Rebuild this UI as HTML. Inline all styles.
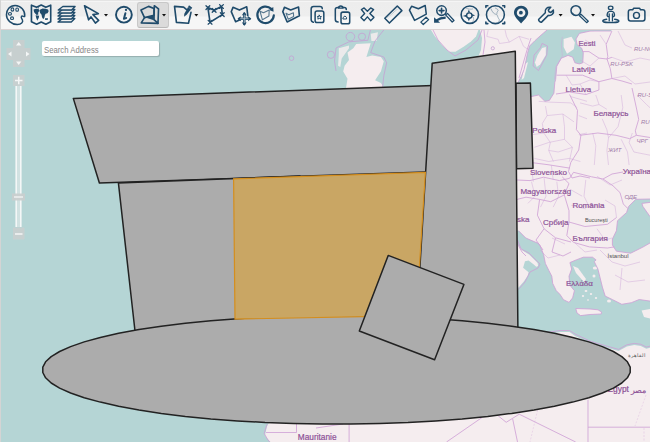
<!DOCTYPE html>
<html><head><meta charset="utf-8">
<style>
html,body{margin:0;padding:0;width:650px;height:442px;overflow:hidden;background:#b5d5d5;font-family:"Liberation Sans",sans-serif}
#tb{position:absolute;left:0;top:0;width:650px;height:29px;background:linear-gradient(#f5f5f5 0,#f5f5f5 1px,#ededed 1px,#eeeeee 15px,#f6f6f6 16px,#f6f6f6 29px);border-top:1px solid #e4e4e4;box-sizing:border-box}
#tbline{position:absolute;left:0;top:29px;width:650px;height:1px;background:#dcd2d2}
#lb{position:absolute;left:0;top:0;width:1px;height:442px;background:#d4d4d4}
#map{position:absolute;left:0;top:30px;width:650px;height:412px}
#sel{position:absolute;left:137px;top:2px;width:32px;height:26px;box-sizing:border-box;background:#dbdbdb;border:1px solid #c8c8c8;border-bottom-color:#b9b9b9;border-radius:3px}
#icons{position:absolute;left:0;top:0}
#search{position:absolute;left:42px;top:41px;width:117px;height:15px;box-sizing:border-box;background:#fff;border-radius:2px;box-shadow:1px 1px 1px rgba(0,0,0,0.18)}
#search span{position:absolute;left:2.3px;top:2.8px;font-size:9.5px;color:#858585;transform:scaleX(0.815);transform-origin:0 0;white-space:nowrap;line-height:11px}
</style></head><body>
<svg id="map" width="650" height="412" viewBox="0 30 650 412">
 <rect x="0" y="30" width="650" height="412" fill="#b5d5d5"/>
 <g id="land" fill="#f5edef" stroke="none">
  <!-- Europe -->
  <path d="M480,30 L650,30 L650,301.1 L639.2,299.5 L631.3,302.7 L621.8,304.3 L612.3,299.5 L605.2,296.1 L602.4,287.1 L599.7,276.2 L597.9,269 L594.3,261.7 L596.1,259.9 L592.5,257.2 L583.4,257.2 L576.2,259.9 L569.9,262.6 L571.7,269 L569,276.2 L569.9,285.2 L574.4,290.7 L572.6,297.9 L569,302.4 L563.5,299.7 L559.9,294.3 L556.3,290.7 L552.7,283.4 L551.8,276.2 L549,270.8 L545.4,263.5 L543.6,254.5 L540,245.4 L538.5,243.5 L525.8,238 L518.6,230.8 L500,230 L478,57 L481,50 L482,38 Z"/>
  <!-- Norway -->
  <path d="M431,30 L435,36.5 L442,45 L449,51.7 L455.5,51.7 L464,46.6 L471,41.5 L476,36.5 L478.4,30 Z"/>
  <!-- Scotland -->
  <path d="M356.2,43.9 L370.7,43.2 L367.8,52.6 L366.4,57 L372.2,55.5 L380.9,57 L383.8,61.3 L380.9,71.5 L378,75.8 L375.1,80.2 L380.9,83.1 L383.8,87.4 L384,90 L346,90 L346.1,87.4 L347.5,78.7 L343.2,71.5 L344.6,65.7 L349,59.9 L347.5,52.6 L353.3,48.3 Z"/>
  <path d="M338.8,48.3 L349,45.4 L349,48.3 L341.7,58.4 L340.3,67.1 L338.1,65.7 L338.8,54.1 Z" opacity="0.85"/>
  <path d="M370.7,33.8 L378,32.3 L376.5,41 L371.4,41 Z" opacity="0.85"/>
  <!-- Africa -->
  <path d="M270.5,442 L267.7,439 L265,435.3 L266.8,427 L268.6,423.3 L300,410 L540,336 L560,332 L569.5,332 L575,336 L590,343 L599.2,345.5 L610.3,348.7 L618.6,351 L626.9,346.4 L634.3,345 L640.8,346 L646.3,348.7 L650,347.8 L650,442 Z"/>
 </g>
 <g id="water" fill="#b5d5d5" stroke="none">
  <!-- Baltic -->
  <path d="M547,30 L541,35.2 L534.9,40.7 L529.5,46.1 L527.5,53.3 L526,60.6 L524,69.6 L521.5,76 L518,82.3 L515,83 L515,97 L530.4,96.8 L538.5,95 L544.9,101.3 L549.4,100.4 L553.9,93.2 L554.8,82.3 L555.6,79.7 L556.8,66.2 L561.3,58.2 L568,55.4 L572.6,57.1 L574.9,62.8 L579.4,63.9 L582.8,62.8 L583.3,52.6 L581.6,48.1 L577.1,44.7 L576,39 L579.4,33.4 L590,31.1 L595,31 L611,31 L612,30 Z"/>
  <!-- Black sea -->
  <path d="M635.8,199.3 L628.6,206.4 L626.6,212.5 L617.5,220.7 L616.4,230.8 L612.4,239 L612.4,245.1 L616.4,251.2 L630.7,253.2 L642.9,247.1 L650,243 L650,216.6 L642.9,206.4 L641.9,203.4 L650,202.4 L650,199 Z"/>
 </g>
 <g fill="#f5edef" stroke="none">
  <!-- Gotland -->
  <path d="M542.1,47.9 L545.8,47 L545.8,55.1 L540.3,64.2 L536.7,66.9 L534.9,62.4 L537.6,55.1 Z"/>
  <!-- Oland -->
  <path d="M525,64 L528,62 L524,78 L521.5,80 Z"/>
  <!-- Estonian islands -->
  <path d="M563.6,39 L571.5,36.8 L574.9,42.4 L573.7,49.2 L567,53.7 L563.6,47 Z"/>
  <!-- Italy heel -->
  <path d="M510,235 L518.4,245.4 L522.6,250.5 L529.4,254.7 L533.1,258.6 L537.6,263.1 L538.1,265.9 L536.3,266.8 L533.1,264 L528.6,260.4 L525,261.3 L523.1,267.7 L528.6,272.2 L527.7,275.8 L524,281.2 L518.6,287.6 L510,290 Z"/>
  <path d="M641.6,310.6 L650,309 L650,318.5 L644,317 Z"/>
  <!-- Aegean islands -->
  <path d="M573,266 L578,268 L586,279 L584,282 L576,273 Z"/>
  <ellipse cx="595" cy="268" rx="2.2" ry="1.6"/>
  <ellipse cx="594" cy="276" rx="1.5" ry="1.5"/>
  <ellipse cx="586" cy="291" rx="1.4" ry="1"/>
  <ellipse cx="591" cy="294" rx="1.2" ry="1"/>
  <ellipse cx="583" cy="296" rx="1.2" ry="0.9"/>
  <ellipse cx="596" cy="298" rx="1.2" ry="1"/>
  <ellipse cx="588" cy="300" rx="1" ry="0.8"/>
  <ellipse cx="609" cy="301" rx="2" ry="1.5"/>
  <ellipse cx="579" cy="284" rx="1" ry="1"/>
  <!-- Crete -->
  <path d="M575.8,308.5 L590,309 L598,309.8 L601.5,312 L601.2,314 L590,314.5 L580.6,315.6 L577,313 Z"/>
 </g>
 <g fill="none" stroke="#c6a2d4" stroke-width="0.9" opacity="0.9">
  <!-- Scotland maritime boundaries -->
  <path d="M336,71 L334.5,61 L336,48 L349,41.8 L367.8,40.3 L370.7,29"/>
  <path d="M383.8,30 L375,41 L370.7,52.6 L383.8,57 L386.7,62.8 L383.8,75.8 L382.3,90"/>
  <circle cx="330.9" cy="54.8" r="3.6"/>
  <circle cx="350.4" cy="36.7" r="4.3"/>
  <circle cx="362" cy="36.7" r="3.6"/>
  <circle cx="291.5" cy="58.2" r="2.3"/>
  <circle cx="492.8" cy="48.3" r="1.6"/>
 </g>
 <g fill="none" stroke="#cfa9da" stroke-width="0.6" opacity="0.8">
  <!-- internal admin boundaries (approx) -->
  <path d="M488.2,30.1 L486.8,36.4 L498.1,39.3 L499.5,43.5 L509.4,42.1 L519.2,36.4 L529.1,39.3 M505.1,30.1 L506.5,36.4 L509.4,42.1 M519.2,36.4 L523.5,46.3 L527.5,49.1 M562.4,36.8 L561.3,44.7 L562.4,56 L555.6,67.3 L554.5,79.7 M538.7,101.3 L548.7,102.1 L570.8,102.9 L577.2,107.7 M545.5,106.1 L547.1,115.6 L542.3,123.5 L543.9,133 L550.3,142.5 L548.7,150.4 L553.4,161.5 M547.1,115.6 L562.9,114 L574,121.9 M562.9,114 L564.5,126.7 L564.5,139.3 L572.4,147.3 L569.3,161.5 M532.8,134.6 L543.9,133 M534.4,147.3 L548.7,142.5 L564.5,139.3 M548.7,150.4 L558.2,152 L572.4,147.3 M534.4,158.4 L548.7,161.5 L569.3,158.4 L580.4,161.5 M578.8,115.6 L587,118.8 M578.8,134.6 L587,133 M570.8,96.6 L587,101.3 M595.8,95 L599,104.5 L606.9,109.3 M580,102.9 L592.7,106.1 L599,104.5 M621.2,95 L622.8,107.7 L618,126.7 L608.5,137.8 M602.2,118.8 L606.9,129.8 L608.5,137.8 M592.7,133 L595.8,145.7 L594.3,165 M608.5,137.8 L606.9,150.4 L608.5,165 M621.2,139.3 L627.5,152 L629.1,165 M632.3,133 L629.1,142.5 L633.9,152 L650,155.2 M637,95 L646.5,104.5 L650,107.7 M585.8,179.9 L584,196.2 L589.4,207.1 L597,205.3 M569.5,189 L582.2,196.2 M571.3,205.3 L585.8,208.9 M531.5,181.7 L535.1,196.2 L527.9,203.4 M544.1,178.1 L546,196.2 L540.5,207.1 M556.8,181.7 L558.6,196.2 L553.2,207.1 M531.5,167.2 L533.3,181.7 M551.4,165.4 L553.2,179.9 M597,176.3 L610,185 L622,180 M605,200 L615,206 L616.5,217.5 M597,228.8 L605,240 L612,238 M580,60 L590,66 L598.9,58.1 M585,40 L596,46 M600,35 L606,44 M566,75 L572,85 L580,84 L586,94.5 M580,84 L590,80 L598.9,81.7 M611.9,57.3 L625,62 L640,58 L650,60 M618,31 L625,45 L632,48 M611.9,78.5 L625,76 L635,84 L650,82 M540,250 L548,258 L560,255 M552,238 L565,244 M575,243 L585,252 L597,250 M600,250 L612,262 L625,266 L640,262 M615,275 L628,282 L645,280 M622,268 L620,290"/>
 </g>
 <g fill="none" stroke="#cf9fd6" stroke-width="0.85" opacity="0.95">
  <!-- country borders -->
  <path d="M569.6,94.5 L577.5,110.4 L576.4,129.6 L580.9,135.3 L578.7,150 L570.8,162.4 L568.5,171.5 L572,178 L580,176 L590,178"/>
  <path d="M579.8,135.3 L597.9,133 L616,135.3 L629.6,138.7 L636.4,135.3 L650,137.5"/>
  <path d="M556,94 L569.6,92 L586,94.5 L598.9,90 L598.9,81.7 L611.9,78.5 L622,81 L632,84"/>
  <path d="M632,88 L636.4,108 L638.7,119.4 L635.3,130.8 L636.4,135.3"/>
  <path d="M530,162.4 L548,164.7 L569.6,168.1"/>
  <path d="M517,180 L530,180.6 L543.6,177.2 L559.4,180.6 L569.6,178.3 L573.5,172.3"/>
  <path d="M582.6,51.6 L589,51.6 L598.9,58.1 L607,59 L611.9,57.3"/>
  <path d="M611.9,31 L606.2,44.3 L607.8,56.5 L607,59 L610.3,68.7 L611.9,78.5"/>
  <path d="M556.5,75.2 L566.3,75.2 L582.6,75.2 L598.9,81.7"/>
  <path d="M573.5,172.3 L591.6,176.8 L603,179 L613,185.8 L620,192.6 L623.3,204 L627.8,208.5"/>
  <path d="M603,179 L612,174 L623,172"/>
  <path d="M562.2,176.8 L569,183.6 L564.3,194.9 L550.7,201.7 L539.6,199.4 L526,197.2 L517,199.4"/>
  <path d="M564.3,194.9 L569,210.7 L569,222"/>
  <path d="M569,222 L584.9,226.5 L607.5,224.3 L616.5,217.5"/>
  <path d="M569,222 L566.8,235.6 L573.5,242.4 L589.4,246.9 L607.5,248 L614.3,246.9"/>
  <path d="M539.6,199.4 L537.4,215.2 L544.1,228.8 L555.5,237.8 L571,242"/>
  <path d="M544,228.8 L536,240 L543,250 M555.5,238 L552,252 L563,256 L571,252"/>
  <path d="M650,301.1 L639.2,299.5 L631.3,302.7 L621.8,304.3 L612.3,299.5 L605.2,296.1 L602.4,287.1 L599.7,276.2 L597.9,269 L594.3,261.7 L596.1,259.9 L592.5,257.2 L583.4,257.2 L576.2,259.9 L569.9,262.6 L571.7,269 L569,276.2 L569.9,285.2 L574.4,290.7 L572.6,297.9 L569,302.4 L563.5,299.7 L559.9,294.3 L556.3,290.7 L552.7,283.4 L551.8,276.2 L549,270.8 L545.4,263.5 L543.6,254.5 L540,245.4 L538.5,243.5 L525.8,238 L518.6,230.8"/>
  <path d="M517.5,240 L521,249 L529,253 L540,264 L538,268 L530,272 L525,282 L518.5,289.5 M517.5,244 L522,252 L526,256"/>
  <path d="M650,199 L635.8,199.3 L628.6,206.4 L626.6,212.5 L617.5,220.7 L616.4,230.8 L612.4,239 L612.4,245.1 L616.4,251.2 L630.7,253.2 L642.9,247.1 L650,243 M650,216.6 L642.9,206.4 L641.9,203.4 L650,202.4"/>
  <path d="M575.8,308.5 L590,309 L598,309.8 L601.5,312 L601.2,314 L590,314.5 L580.6,315.6 L577,313 Z"/>
  <path d="M547,30 L541,35.2 L534.9,40.7 L529.5,46.1 L527.5,53.3 L526,60.6 L524,69.6 L521.5,76 L518,82.3"/>
  <path d="M530.4,96.8 L538.5,95 L544.9,101.3 L549.4,100.4 L553.9,93.2 L554.8,82.3 L555.6,79.7 L556.8,66.2 L561.3,58.2 L568,55.4 L572.6,57.1 L574.9,62.8 L579.4,63.9 L582.8,62.8 L583.3,52.6 L581.6,48.1 L577.1,44.7 L576,39 L579.4,33.4 L590,31.1 L595,31 L611,31"/>
  <path d="M531,38 L527,50 L523,64 L519,78 M542.1,43.4 L547.6,46.1 L546.7,55.1 L538.5,70.5 L533.1,66 L534,55.1 L540.3,47.9 Z"/>
  <path d="M433,30 L438,40 L447,50 L455,56 L466,50 L478,40 L482,30 M484,30 L485,42 L483,55"/>
  <path d="M540,333.5 L560,330.5 L569.5,330.5 L576,334.5 L590,341.1 L599.2,343.9 L610.3,347.1 L618.6,349.4 L626.9,344.8 L634.3,343.4 L640.8,344.3 L646.3,347.1 L650,346.2"/>
  <path d="M267,424.2 L264.2,433.5 L268,440 L269.8,442"/>
  <path d="M588,399.7 L588,442 M588,427.2 L650,427.2 M482,417.5 L446.5,442 M498.2,415.8 L506.2,422.3 L519.2,414.2 L575.7,442 M512.7,419 L517.5,442 M349.1,424 L349.1,442 M266,432.5 L296.5,432.5 L296.5,424 M316,428 L343,424"/>
  <path d="M646,395 L635,426 M644,428 L644,442 M540,400 L530,442" stroke-dasharray="2,1.5" stroke-width="0.5" opacity="0.6"/>
 </g>
 <g font-family="Liberation Sans, sans-serif" fill="#8d5297" stroke="#8d5297" stroke-width="0.2">
  <text x="578.5" y="45.7" font-size="7.6">Eesti</text>
  <text x="572" y="72.0" font-size="8">Latvija</text>
  <text x="565.5" y="92.4" font-size="8">Lietuva</text>
  <text x="593.4" y="116.2" font-size="8">Беларусь</text>
  <text x="532.3" y="133.3" font-size="8">Polska</text>
  <text x="530" y="175.2" font-size="8">Slovensko</text>
  <text x="622.8" y="174.0" font-size="8">Україна</text>
  <text x="520.4" y="194.2" font-size="8">Magyarország</text>
  <text x="572.4" y="207.7" font-size="8">România</text>
  <text x="517" y="222.0" font-size="8">ska</text>
  <text x="543" y="225.3" font-size="8">Србија</text>
  <text x="572.4" y="240.5" font-size="8">България</text>
  <text x="566" y="286.3" font-size="8">Ελλάδα</text>
  <text x="607.5" y="392.3" font-size="8.4">Egypt</text><text x="630.6" y="392.5" font-size="8">مصر</text>
  <text x="297.8" y="440" font-size="8.3">Mauritanie</text>
 </g>
 <g font-family="Liberation Sans, sans-serif" fill="#a07aa8" font-style="italic" font-size="6">
  <text x="610.3" y="65.5">RU-PSK</text>
  <text x="633.9" y="50.8">RU-NGR</text>
  <text x="637.5" y="96.6">RU-SMO</text>
  <text x="641" y="124">RU-BRY</text>
  <text x="636.4" y="143.2">ЧРГ</text>
  <text x="608" y="152.3">ЖИТ</text>
  <text x="624.4" y="199.4">ОДЕ</text>
 </g>
 <g font-family="Liberation Sans, sans-serif" fill="#505050" font-size="6">
  <text x="584.9" y="221.8" font-size="5.5">Bucureşti</text>
  <text x="607.5" y="258.2">İstanbul</text>
  <text x="628.3" y="357" font-size="5">القاهرة</text>
 </g>
 <!-- polygons -->
 <g stroke="#222" stroke-width="1.5" fill="#acacac" stroke-linejoin="round">
  <path d="M516,83.2 L530.4,83 L533,168.2 L516.5,168.8 Z"/>
  <path d="M73.3,98.4 L440,85.2 L440,171.6 L99.4,183 Z"/>
  <path d="M118.4,182.9 L300,176 L300,340 L136,340 Z"/>
  <path d="M432.2,63.3 L515.3,51.3 L518,340 L415.5,340 Z"/>
  <path d="M630.2,372.5 L627.4,377.8 L621.8,383.0 L613.4,388.1 L602.4,393.0 L588.8,397.7 L572.7,402.1 L554.4,406.3 L534.0,410.0 L511.7,413.4 L487.7,416.4 L462.2,418.9 L435.6,420.9 L408.0,422.5 L379.7,423.5 L350.9,424.0 L322.1,424.0 L293.3,423.5 L265.0,422.5 L237.4,420.9 L210.8,418.9 L185.3,416.4 L161.3,413.4 L139.0,410.0 L118.6,406.3 L100.3,402.1 L84.2,397.7 L70.6,393.0 L59.6,388.1 L51.2,383.0 L45.6,377.8 L42.8,372.5 L42.8,367.1 L45.6,361.8 L51.2,356.6 L59.6,351.5 L70.6,346.6 L84.2,341.9 L100.3,337.5 L118.6,333.3 L139.0,329.6 L161.3,326.2 L185.3,323.2 L210.8,320.7 L237.4,318.7 L265.0,317.1 L293.3,316.1 L322.1,315.6 L350.9,315.6 L379.7,316.1 L408.0,317.1 L435.6,318.7 L462.2,320.7 L487.7,323.2 L511.7,326.2 L534.0,329.6 L554.4,333.3 L572.7,337.5 L588.8,341.9 L602.4,346.6 L613.4,351.5 L621.8,356.6 L627.4,361.8 L630.2,367.1 Z"/>
 </g>
 <path d="M233.6,178.8 L425.4,172.4 L416.3,315.6 L235,319.1 Z" fill="#c9a664" stroke="#d48e1e" stroke-width="1.2"/>
 <path d="M388.2,255.4 L463.9,284.4 L434.6,359.7 L359.3,331 Z" fill="#acacac" stroke="#222" stroke-width="1.5" stroke-linejoin="round"/>
</svg>
<div id="tb"></div>
<div id="tbline"></div>
<div id="sel"></div>
<svg id="icons" width="650" height="29" viewBox="0 0 650 29" style="position:absolute;left:0;top:0">
<defs>
<style>.i{fill:none;stroke:#1f4b6b;stroke-width:30;stroke-linejoin:round;stroke-linecap:round}.f{fill:#1f4b6b}</style>
</defs>
<!-- palette -->
<g transform="translate(4,3) scale(0.05429)">
 <path class="i" style="stroke-width:27" d="M382,240 C392,140 310,45 205,45 C105,45 45,125 45,215 C45,315 135,395 245,395 C325,395 352,350 342,318 C334,290 305,270 322,245 C340,225 378,270 382,240 Z"/>
 <ellipse class="i" cx="155" cy="120" rx="25" ry="30" style="stroke-width:20"/>
 <ellipse class="i" cx="242" cy="123" rx="25" ry="30" style="stroke-width:20"/>
 <ellipse class="i" cx="110" cy="200" rx="28" ry="25" style="stroke-width:20"/>
 <ellipse class="i" cx="148" cy="280" rx="28" ry="25" style="stroke-width:20"/>
</g>
<!-- world map -->
<g transform="translate(29,3) scale(0.05429)">
 <path class="i" d="M45,40 L140,80 L225,38 L310,80 L400,40 L400,345 L310,390 L225,350 L140,392 L45,345 Z"/>
 <path class="f" d="M85,118 L130,105 L178,112 L188,148 L168,178 L172,212 L142,222 L118,196 L95,172 L88,142 Z"/>
 <path class="f" d="M122,224 L186,234 L178,276 L152,326 L132,272 Z"/>
 <path class="f" d="M192,128 L250,100 L300,108 L352,118 L362,152 L342,190 L305,198 L292,225 L285,265 L262,300 L240,262 L232,215 L205,185 L198,160 Z"/>
 <path class="f" d="M292,282 L350,282 L348,310 L300,312 Z"/>
 <circle class="f" cx="172" cy="88" r="12"/>
</g>
<!-- layers -->
<g transform="translate(55,3) scale(0.05429)" >
 <path class="i" style="fill:#f1f1f1;stroke-width:26" d="M140,285 L365,285 L300,350 L55,350 Z"/>
 <path class="i" style="fill:#f1f1f1;stroke-width:26" d="M140,230 L365,230 L300,295 L55,295 Z"/>
 <path class="i" style="fill:#f1f1f1;stroke-width:26" d="M140,175 L365,175 L300,240 L55,240 Z"/>
 <path class="i" style="fill:#f1f1f1;stroke-width:26" d="M140,120 L365,120 L300,185 L55,185 Z"/>
 <path class="i" style="fill:#f1f1f1;stroke-width:26" d="M145,65 L370,65 L305,130 L60,130 Z"/>
</g>
<!-- arrow -->
<g transform="translate(81,3) scale(0.05429)">
 <path class="i" d="M65,50 L320,195 L220,215 L325,320 L265,370 L185,255 L140,310 Z"/>
</g>
<path d="M104,14 L108,14 L106,16.5 Z" fill="#111"/>
<!-- info -->
<circle cx="123.9" cy="14.7" r="7.9" fill="none" stroke="#1f4b6b" stroke-width="1.9"/>
<circle cx="126" cy="9.9" r="1.15" fill="#1f4b6b"/>
<path d="M125.4,13.2 L123.9,18.7 L126.2,18.1" fill="none" stroke="#1f4b6b" stroke-width="2" stroke-linecap="round" stroke-linejoin="round"/>
<!-- selected polygon -->
<g transform="translate(138,3) scale(0.05429)">
 <path class="i" d="M55,130 L195,62 L295,100 L295,225 L120,270 Z"/>
 <path class="i" d="M300,50 L378,110 L368,375 L295,305 Z"/>
 <path class="i" d="M120,270 L60,365 L368,375"/>
 <path class="f" d="M150,272 L292,215 L292,318 Z"/>
</g>
<path d="M162,14 L166,14 L164,16.5 Z" fill="#111"/>
<!-- edit -->
<g transform="translate(171,3) scale(0.05429)">
 <path class="i" d="M282,118 L232,75 L65,62 L100,358 L322,372 L368,172"/>
 <path class="f" d="M332,42 L392,88 L288,218 L240,252 L246,196 Z"/>
 <path d="M318,78 L372,118" stroke="#f1f1f1" stroke-width="10" opacity="0.5"/>
</g>
<path d="M194.3,14 L198.3,14 L196.3,16.5 Z" fill="#111"/>
<!-- heart polygon vertices -->
<g transform="translate(203,3) scale(0.05429)">
 <path class="i" d="M90,85 L205,135 L340,65 L355,215 L130,355 Z"/>
 <path class="i" style="stroke-width:24" d="M55,50 L125,120 M125,50 L55,120 M170,100 L240,170 M240,100 L170,170 M305,30 L375,100 M375,30 L305,100 M320,180 L390,250 M390,180 L320,250 M95,320 L165,390 M165,320 L95,390"/>
</g>
<!-- move polygon -->
<g transform="translate(228,3) scale(0.05429)">
 <path class="i" d="M240,300 L140,345 L60,160 L92,80 L210,130 L345,70 L365,235"/>
 <path class="i" style="stroke-width:46" d="M300,200 L300,385 M210,290 L395,290"/>
 <path class="f" d="M300,165 L345,225 L255,225 Z M300,420 L345,360 L255,360 Z M175,290 L235,245 L235,335 Z M430,290 L370,245 L370,335 Z"/>
 <path d="M300,215 L300,370 M225,290 L380,290" stroke="#c9d3da" stroke-width="14" fill="none"/>
</g>
<!-- rotate -->
<g transform="translate(254,3) scale(0.05429)">
 <path class="i" style="stroke-width:40" d="M365,228 A152,152 0 1 1 318,108"/>
 <path class="f" d="M355,75 L360,160 L280,130 Z"/>
 <path class="i" style="stroke-width:20;opacity:0.75" d="M110,150 L175,180 L280,130 L275,240 L155,310 Z"/>
</g>
<!-- polygon inner -->
<g transform="translate(279,3) scale(0.05429)">
 <path class="i" d="M70,160 L100,80 L215,130 L360,75 L375,235 L150,350 Z"/>
 <path class="i" style="stroke-width:20;opacity:0.75" d="M130,190 L180,215 L265,180 L270,250 L170,300 Z"/>
</g>
<!-- copy -->
<g transform="translate(306,3) scale(0.05429)">
 <path class="i" style="stroke-width:28" d="M135,355 C110,350 95,335 95,305 L95,110 C95,80 115,65 140,65 L255,65 C285,65 300,85 300,105"/>
 <rect class="i" style="stroke-width:28" x="168" y="148" width="160" height="212" rx="35"/>
 <path class="i" style="stroke-width:18" d="M245,225 L258,250 L285,252 L265,270 L272,297 L245,283 L218,297 L225,270 L205,252 L232,250 Z"/>
</g>
<!-- paste -->
<g transform="translate(330,3) scale(0.05429)">
 <path class="i" style="stroke-width:28" d="M150,350 C115,350 98,330 98,305 L98,120 C98,95 115,85 140,85 L160,85 M235,85 L265,85 C290,85 300,105 300,120"/>
 <path class="i" style="stroke-width:26" d="M155,95 C160,60 175,55 197,55 C220,55 238,62 240,95 Z"/>
 <rect class="i" style="stroke-width:28" x="203" y="168" width="160" height="215" rx="35"/>
 <path class="i" style="stroke-width:18" d="M245,265 L275,240 L305,265 L305,295 L245,295 Z"/>
</g>
<!-- X -->
<g transform="translate(356,3) scale(0.05429)">
 <path class="i" style="stroke-width:26" d="M100,120 L150,90 L210,150 L270,90 L325,120 L255,195 L330,265 L270,325 L210,255 L150,325 L90,265 L160,195 Z"/>
</g>
<!-- ruler -->
<g transform="translate(381,3) scale(0.05429)">
 <path class="i" style="stroke-width:28" d="M70,280 L300,55 L385,140 L155,370 Z"/>
 <path class="i" style="stroke-width:8;opacity:0.55" d="M120,265 L135,280 M140,245 L155,260 M160,225 L175,240 M180,205 L195,220 M200,185 L215,200 M220,165 L235,180 M240,145 L255,160 M260,125 L275,140 M280,105 L295,120"/>
</g>
<!-- polygon minus -->
<g transform="translate(407,3) scale(0.05429)">
 <path class="i" style="stroke-width:28" d="M45,130 L85,60 L210,105 L335,45 L355,205 L140,320 Z"/>
 <path class="i" style="stroke-width:24" d="M255,352 L352,262 L398,306 L300,396 Z"/>
</g>
<!-- zoom back -->
<g transform="translate(432,3) scale(0.05429)">
 <circle class="i" style="stroke-width:28" cx="176" cy="140" r="88"/>
 <path class="i" style="stroke-width:30" d="M132,140 L220,140 M176,96 L176,184"/>
 <path class="i" style="stroke-width:24" d="M250,218 L285,192 L405,322 L372,350 Z"/>
 <path class="f" d="M38,262 L38,362 L150,362 Z"/>
 <path d="M85,320 C140,280 200,270 252,268" fill="none" stroke="#1f4b6b" stroke-width="42"/>
</g>
<!-- globe crosshair -->
<g transform="translate(458,3) scale(0.05429)">
 <circle class="i" style="stroke-width:30" cx="218" cy="215" r="160"/>
 <circle class="i" style="stroke-width:26" cx="208" cy="232" r="50"/>
 <path class="f" d="M200,120 L222,175 L180,175 Z M200,335 L222,285 L180,285 Z M90,238 L150,215 L150,258 Z M315,225 L260,205 L260,250 Z"/>
 <path class="i" style="stroke-width:14;opacity:0.45" d="M150,95 C190,115 240,120 270,110 M280,260 C300,280 290,320 270,340"/>
</g>
<!-- globe corners -->
<g transform="translate(484,3) scale(0.05429)">
 <circle class="i" style="stroke-width:28" cx="210" cy="215" r="165"/>
 <path class="i" style="stroke-width:30" d="M35,80 L35,50 L70,50 M345,50 L380,50 L380,80 M35,350 L35,380 L70,380 M345,380 L380,380 L380,350"/>
 <path class="i" style="stroke-width:14;opacity:0.5" d="M130,110 C150,170 190,210 230,210 C260,240 250,270 280,300 C290,320 270,340 265,350 M210,95 C230,110 260,110 260,140 C240,170 230,190 240,200"/>
</g>
<!-- marker -->
<path d="M521.1,5.7 C517,5.7 514,8.8 514,12.8 C514,16.5 518.5,20.5 521.1,23.6 C523.7,20.5 528.2,16.5 528.2,12.8 C528.2,8.8 525.2,5.7 521.1,5.7 Z" fill="#1f4b6b"/>
<circle cx="521.1" cy="12.7" r="4.3" fill="#f1f1f1"/>
<circle cx="520.9" cy="12.7" r="1.9" fill="#1f4b6b"/>
<!-- wrench -->
<g transform="translate(535,3) scale(0.05429)">
 <path class="i" style="stroke-width:28" d="M70,300 L190,180 C175,115 225,65 290,80 L245,128 L258,160 L292,175 L338,128 C355,195 305,240 245,228 L125,348 C105,368 52,320 70,300 Z"/>
</g>
<path d="M558.6,14 L562.6,14 L560.6,16.5 Z" fill="#111"/>
<!-- magnifier -->
<g transform="translate(566,3) scale(0.05429)">
 <circle class="i" style="stroke-width:28" cx="182" cy="140" r="90"/>
 <path class="f" style="opacity:0.8" d="M120,170 C140,200 170,220 200,220 L150,230 C120,220 105,200 120,170 Z"/>
 <path class="i" style="stroke-width:24" d="M245,230 L275,205 L410,335 L380,362 Z"/>
</g>
<path d="M591,14 L595,14 L593,16.5 Z" fill="#111"/>
<!-- pegman -->
<g transform="translate(599,3) scale(0.05429)">
 <ellipse class="i" style="stroke-width:24" cx="215" cy="90" rx="42" ry="32"/>
 <path class="i" style="stroke-width:24" d="M188,330 L188,252 L162,250 C150,240 150,200 160,178 C170,162 185,156 200,156 L235,156 C250,156 265,162 275,178 C285,200 285,240 273,250 L248,252 L248,330 M188,200 L188,250 M248,200 L248,250"/>
 <path class="i" style="stroke-width:28" d="M140,300 C70,310 60,330 80,345 C120,365 320,365 355,345 C375,330 360,310 290,300"/>
</g>
<!-- camera -->
<g transform="translate(624,3) scale(0.05429)">
 <path class="i" style="stroke-width:28" d="M120,125 L160,125 L180,95 L285,95 L305,125 L345,125 C370,125 385,140 385,165 L385,290 C385,315 370,330 345,330 L120,330 C95,330 80,315 80,290 L80,165 C80,140 95,125 120,125 Z"/>
 <circle class="i" style="stroke-width:26" cx="230" cy="228" r="55"/>
</g>
</svg>

<div id="search"><span>Search Address</span></div>
<svg id="ctrl" width="40" height="220" viewBox="0 30 40 220" style="position:absolute;left:0;top:30px">
 <g fill="#c9cfcf" opacity="0.9">
  <rect x="13" y="40" width="11.5" height="27"/>
  <rect x="6.5" y="48" width="24" height="12"/>
 </g>
 <g fill="#f4f6f6">
  <path d="M18.7,42 L21.3,45.5 L16.1,45.5 Z"/>
  <path d="M18.7,65 L21.3,61.5 L16.1,61.5 Z"/>
  <path d="M8,54 L11.5,51.4 L11.5,56.6 Z"/>
  <path d="M29.5,54 L26,51.4 L26,56.6 Z"/>
 </g>
 <rect x="13" y="75" width="11.5" height="11" fill="#c9cfcf" opacity="0.9"/>
 <path d="M15,80.5 L22.5,80.5 M18.75,76.8 L18.75,84.2" stroke="#f4f6f6" stroke-width="1.5"/>
 <rect x="15.5" y="86" width="6" height="141" fill="#d2e2e2"/>
 <rect x="15.5" y="86" width="1.5" height="141" fill="#f4f7f7"/>
 <rect x="20" y="86" width="1.5" height="141" fill="#f4f7f7"/>
 <rect x="12" y="193.5" width="13" height="7" fill="#c9cfcf" opacity="0.95"/>
 <path d="M14,197 L23,197" stroke="#f4f6f6" stroke-width="1.3"/>
 <rect x="13" y="227.5" width="11.5" height="12" fill="#c9cfcf" opacity="0.9"/>
 <path d="M15,234 L22.5,234" stroke="#f4f6f6" stroke-width="1.5"/>
</svg>
<div id="lb"></div>
</body></html>
